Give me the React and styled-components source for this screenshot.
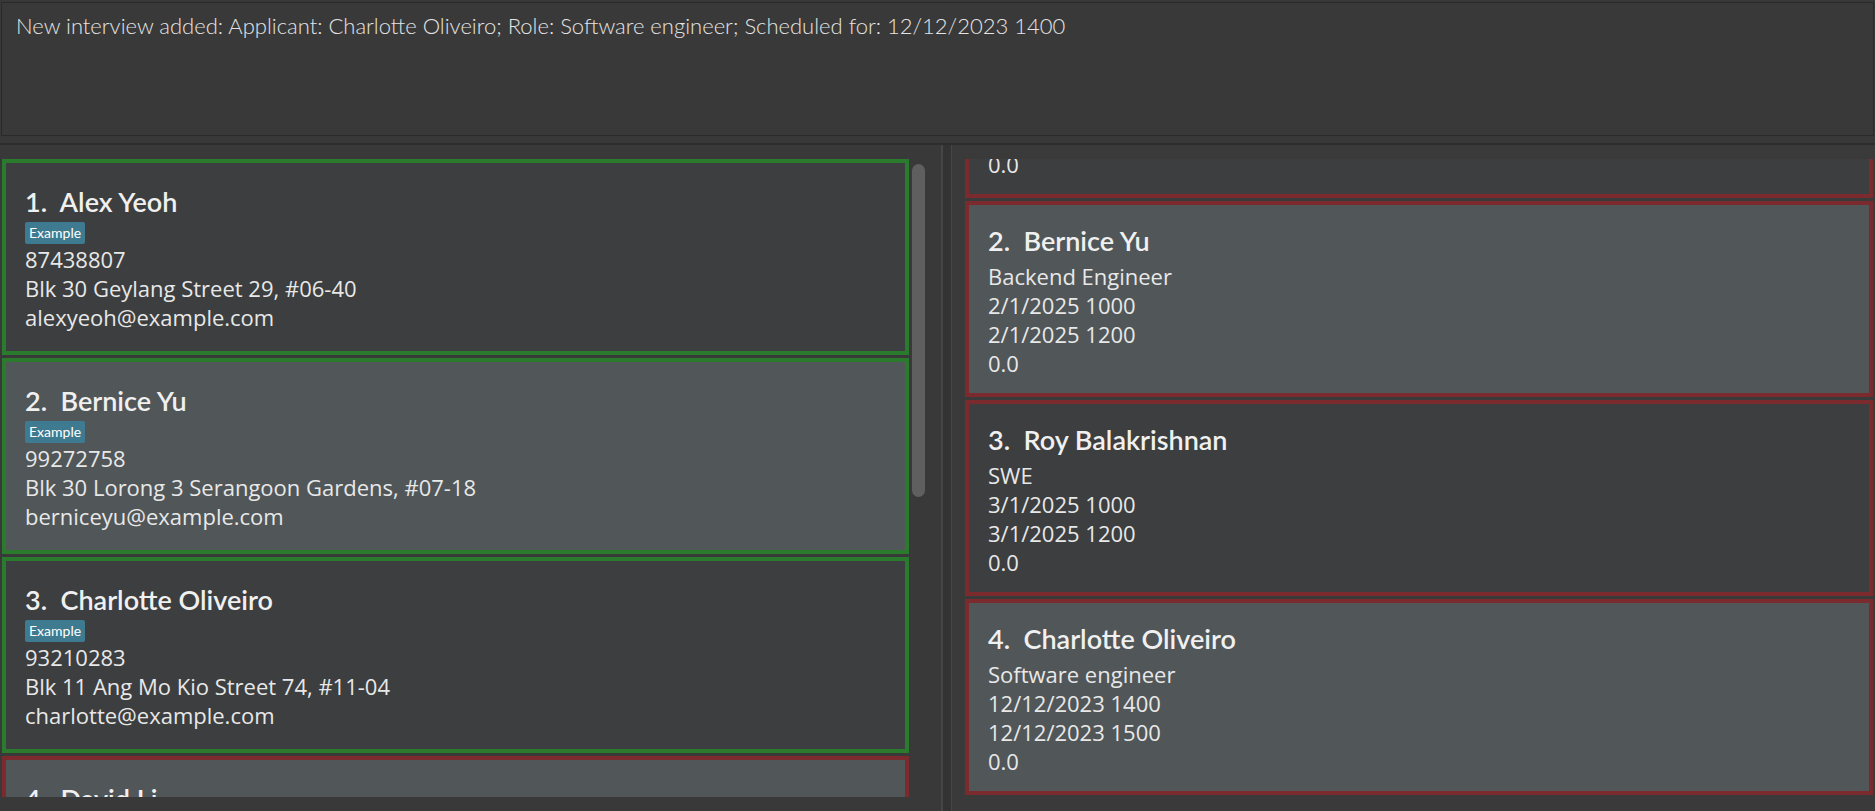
import React from 'react'
import styled, { createGlobalStyle } from 'styled-components'

const GlobalStyle = createGlobalStyle`
  html, body {
    margin: 0;
    padding: 0;
    background: #383838;
  }
  body {
    font-family: Lato, "Noto Sans", sans-serif;
    overflow: hidden;
  }
`

const persons = [
  { name: 'Alex Yeoh', phone: '87438807', address: 'Blk 30 Geylang Street 29, #06-40', email: 'alexyeoh@example.com', ok: true },
  { name: 'Bernice Yu', phone: '99272758', address: 'Blk 30 Lorong 3 Serangoon Gardens, #07-18', email: 'berniceyu@example.com', ok: true },
  { name: 'Charlotte Oliveiro', phone: '93210283', address: 'Blk 11 Ang Mo Kio Street 74, #11-04', email: 'charlotte@example.com', ok: true },
  { name: 'David Li', phone: '91031282', address: 'Blk 436 Serangoon Gardens Street 26, #16-43', email: 'lidavid@example.com', ok: false },
]

const interviews = [
  { name: 'Alex Yeoh', role: 'Frontend Engineer', start: '1/1/2025 1000', end: '1/1/2025 1200', score: '0.0' },
  { name: 'Bernice Yu', role: 'Backend Engineer', start: '2/1/2025 1000', end: '2/1/2025 1200', score: '0.0' },
  { name: 'Roy Balakrishnan', role: 'SWE', start: '3/1/2025 1000', end: '3/1/2025 1200', score: '0.0' },
  { name: 'Charlotte Oliveiro', role: 'Software engineer', start: '12/12/2023 1400', end: '12/12/2023 1500', score: '0.0' },
]

export default function App() {
  return (
    <>
      <GlobalStyle />
      <Window>
        <ResultBox>
          <ResultText>
            New interview added: Applicant: Charlotte Oliveiro; Role: Software engineer; Scheduled for: 12/12/2023 1400
          </ResultText>
        </ResultBox>

        <Split>
          <LeftPane>
            <Viewport>
              <CardList>
                {persons.map((p, i) => (
                  <Card key={p.name} $odd={i % 2 === 1} $border={p.ok ? '#2b7b2e' : '#7b2a2e'} $top={22}>
                    <Name>{`${i + 1}.  ${p.name}`}</Name>
                    <Tag>Example</Tag>
                    <Line>{p.phone}</Line>
                    <Line>{p.address}</Line>
                    <Line>{p.email}</Line>
                  </Card>
                ))}
              </CardList>
            </Viewport>
            <ScrollTrack>
              <Thumb />
            </ScrollTrack>
          </LeftPane>

          <Divider />

          <RightPane>
            <Viewport>
              <CardList $scroll={157}>
                {interviews.map((iv, i) => (
                  <Card key={iv.name} $odd={i % 2 === 1} $border="#7b2a2e" $top={19}>
                    <Name>{`${i + 1}.  ${iv.name}`}</Name>
                    <Line $first>{iv.role}</Line>
                    <Line>{iv.start}</Line>
                    <Line>{iv.end}</Line>
                    <Line>{iv.score}</Line>
                  </Card>
                ))}
              </CardList>
            </Viewport>
          </RightPane>
        </Split>
      </Window>
    </>
  )
}

const Window = styled.div`
  display: flex;
  flex-direction: column;
  height: 811px;
  background: #383838;
  color: #ececec;
`

const ResultBox = styled.div`
  margin: 2px 1px 0 1px;
  height: 134px;
  box-sizing: border-box;
  border: 1px solid #2a2a2a;
  background: #393939;
  padding: 10px 14px;
`

const ResultText = styled.div`
  font-family: Lato, "Noto Sans", sans-serif;
  font-weight: 300;
  font-size: 22px;
  line-height: 26px;
  color: #e4e4e4;
`

const Split = styled.div`
  flex: 1;
  display: flex;
  margin-top: 7px;
  border-top: 2px solid #2d2d2d;
  min-height: 0;
`

const LeftPane = styled.div`
  width: 941px;
  display: flex;
  box-sizing: border-box;
  padding: 14px 0 14px 2px;
  background: #393939;
`

const RightPane = styled.div`
  flex: 1;
  display: flex;
  box-sizing: border-box;
  padding: 14px 2px 14px 13px;
  background: #3a3a3a;
`

const Viewport = styled.div`
  flex: 1;
  overflow: hidden;
`

const CardList = styled.div`
  display: flex;
  flex-direction: column;
  gap: 3px;
  margin-top: ${p => (p.$scroll ? -p.$scroll : 0)}px;
`

const ScrollTrack = styled.div`
  width: 32px;
  box-sizing: border-box;
  padding: 5px 0 0 3px;
`

const Thumb = styled.div`
  width: 13px;
  height: 333px;
  border-radius: 7px;
  background: #5f5f5f;
`

const Divider = styled.div`
  width: 11px;
  box-sizing: border-box;
  border-left: 2px solid #464646;
  border-right: 1px solid #464646;
  background: #333333;
`

const Card = styled.div`
  flex: none;
  height: 196px;
  box-sizing: border-box;
  border: 4px solid ${p => p.$border};
  background: ${p => (p.$odd ? '#515658' : '#3c3e3f')};
  padding: ${p => p.$top}px 19px 0 19px;
  display: flex;
  flex-direction: column;
  align-items: flex-start;
`

const Name = styled.div`
  font-size: 27px;
  font-weight: 600;
  line-height: 34px;
  white-space: pre;
  color: #f0f0f0;
`

const Tag = styled.span`
  margin: 3px 0 1px;
  height: 22px;
  line-height: 22px;
  padding: 0 4px;
  border-radius: 2px;
  background: #3e7b91;
  color: #ffffff;
  font-size: 14px;
`

const Line = styled.div`
  font-family: "Open Sans", Lato, sans-serif;
  font-size: 22px;
  line-height: 29px;
  margin-top: ${p => (p.$first ? 4 : 0)}px;
  color: #e8e8e8;
  white-space: nowrap;
`
